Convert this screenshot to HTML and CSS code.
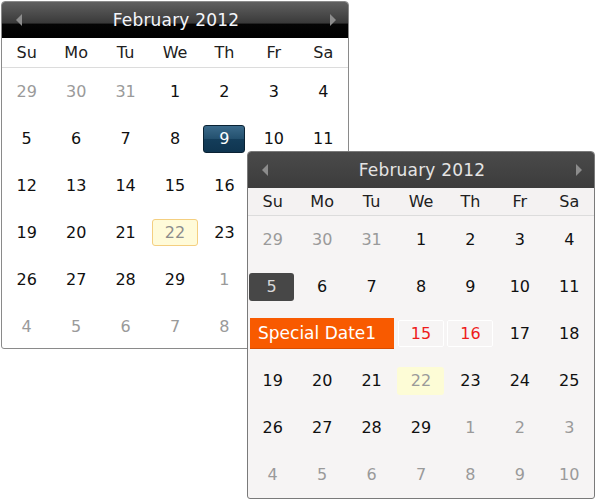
FILE: index.html
```html
<!DOCTYPE html>
<html>
<head>
<meta charset="utf-8">
<link rel="stylesheet" href="styles.css">
</head>
<body>
<div class="canvas">
  <div class="cal cal-a">
    <div class="head">
      <span class="arrow left"></span>
      <span class="title">February 2012</span>
      <span class="arrow right"></span>
    </div>
    <div class="names">
      <span>Su</span><span>Mo</span><span>Tu</span><span>We</span><span>Th</span><span>Fr</span><span>Sa</span>
    </div>
    <div class="days">
      <span class="other">29</span><span class="other">30</span><span class="other">31</span><span>1</span><span>2</span><span>3</span><span>4</span>
      <span>5</span><span>6</span><span>7</span><span>8</span><span><b class="sel-a">9</b></span><span>10</span><span>11</span>
      <span>12</span><span>13</span><span>14</span><span>15</span><span>16</span><span>17</span><span>18</span>
      <span>19</span><span>20</span><span>21</span><span><b class="today-a">22</b></span><span>23</span><span>24</span><span>25</span>
      <span>26</span><span>27</span><span>28</span><span>29</span><span class="other">1</span><span class="other">2</span><span class="other">3</span>
      <span class="other">4</span><span class="other">5</span><span class="other">6</span><span class="other">7</span><span class="other">8</span><span class="other">9</span><span class="other">10</span>
    </div>
  </div>

  <div class="cal cal-b">
    <div class="head">
      <span class="arrow left"></span>
      <span class="title">February 2012</span>
      <span class="arrow right"></span>
    </div>
    <div class="names">
      <span>Su</span><span>Mo</span><span>Tu</span><span>We</span><span>Th</span><span>Fr</span><span>Sa</span>
    </div>
    <div class="days">
      <span class="other">29</span><span class="other">30</span><span class="other">31</span><span>1</span><span>2</span><span>3</span><span>4</span>
      <span><b class="sel-b">5</b></span><span>6</span><span>7</span><span>8</span><span>9</span><span>10</span><span>11</span>
      <span class="span3"><b class="special">Special Date1</b></span><span><b class="red">15</b></span><span><b class="red">16</b></span><span>17</span><span>18</span>
      <span>19</span><span>20</span><span>21</span><span><b class="today-b">22</b></span><span>23</span><span>24</span><span>25</span>
      <span>26</span><span>27</span><span>28</span><span>29</span><span class="other">1</span><span class="other">2</span><span class="other">3</span>
      <span class="other">4</span><span class="other">5</span><span class="other">6</span><span class="other">7</span><span class="other">8</span><span class="other">9</span><span class="other">10</span>
    </div>
  </div>
</div>
</body>
</html>
```

FILE: styles.css
```css
html, body {
  margin: 0;
  padding: 0;
  background: #ffffff;
}
.canvas {
  position: relative;
  width: 597px;
  height: 500px;
  font-family: "DejaVu Sans", Verdana, sans-serif;
  font-size: 15px;
  color: #1a1a1a;
}
.cal {
  box-sizing: border-box;
  width: 348px;
  height: 348px;
  border: 1px solid #8a8a8a;
  border-radius: 4px 4px 3px 3px;
  overflow: hidden;
  background: #ffffff;
  display: flex;
  flex-direction: column;
}
.cal-a {
  margin: 1px 0 0 1px;
}
.cal-b {
  position: absolute;
  left: 247px;
  top: 150px;
  background: #f6f4f4;
  border-color: #7a7a7a;
}
.head {
  height: 36px;
  display: flex;
  align-items: center;
  justify-content: space-between;
  padding: 0 12px 0 14px;
  flex: none;
}
.cal-a .head {
  background: linear-gradient(#606060 0%, #3a3a3a 58%, #050505 62%, #000000 100%);
}
.cal-b .head {
  background: linear-gradient(#4a4a4a, #3c3c3c);
}
.title {
  font-size: 17px;
  color: #f4f6fb;
  letter-spacing: 0.2px;
}
.cal-b .title {
  color: #e4e4e4;
}
.arrow {
  width: 0;
  height: 0;
  border-top: 6px solid transparent;
  border-bottom: 6px solid transparent;
}
.arrow.left {
  border-right: 6px solid #8c8c8c;
}
.arrow.right {
  border-left: 6px solid #8c8c8c;
}
.names {
  display: grid;
  grid-template-columns: repeat(7, 1fr);
  height: 29px;
  align-items: center;
  border-bottom: 1px solid #dcdcdc;
  flex: none;
}
.cal-b .names {
  height: 27px;
  background: #f4f2f2;
}
.names span {
  text-align: center;
  font-size: 16px;
  color: #202020;
}
.days {
  display: grid;
  grid-template-columns: repeat(7, 1fr);
  grid-auto-rows: 47px;
  flex: 1;
}
.days span {
  display: flex;
  align-items: center;
  justify-content: center;
  color: #101010;
  font-size: 16px;
}
.days span.other {
  color: #9a9a9a;
}
.days b {
  font-weight: normal;
  display: flex;
  align-items: center;
  justify-content: center;
  box-sizing: border-box;
}
.sel-a {
  width: 42px;
  height: 28px;
  border: 1px solid #0a2233;
  border-radius: 3px;
  color: #ffffff;
  background: linear-gradient(#3b6a8a 0%, #24516f 48%, #143d5a 52%, #0f3550 100%);
}
.today-a {
  width: 46px;
  height: 27px;
  border: 1px solid #f4cf80;
  border-radius: 3px;
  background: #fffbd9;
  color: #8c8c8c;
}
.sel-b {
  width: 45px;
  height: 28px;
  border-radius: 3px;
  background: #474747;
  color: #d8d8d8;
  margin-right: 2px;
}
.days span.span3 {
  grid-column: span 3;
  justify-content: flex-start;
  padding-left: 2px;
}
.days b.special {
  width: 144px;
  height: 31px;
  background: #f85a00;
  color: #ffffff;
  border-bottom: 1px solid #d84c00;
  justify-content: flex-start;
  padding-left: 8px;
  font-size: 17px;
}
.red {
  width: 46px;
  height: 27px;
  border: 1px solid #ffffff;
  border-radius: 2px;
  color: #ee1c1c;
}
.today-b {
  width: 47px;
  height: 28px;
  border-radius: 3px;
  background: #fdfcd6;
  color: #9a9a9a;
}
```
